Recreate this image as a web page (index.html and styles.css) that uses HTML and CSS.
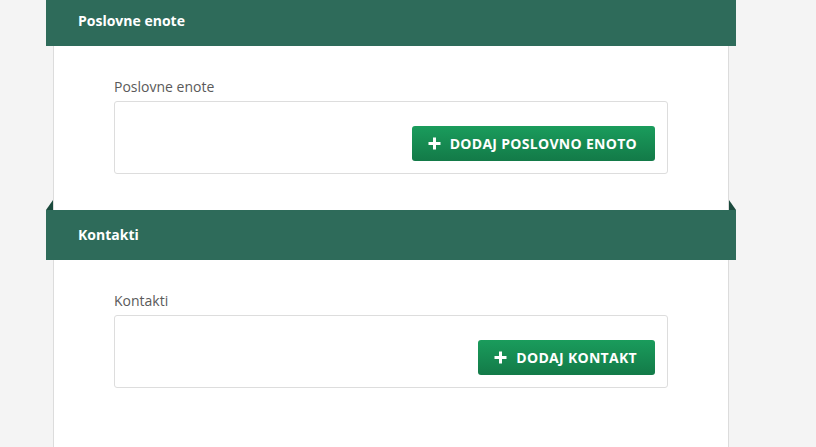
FILE: index.html
```html
<!DOCTYPE html>
<html lang="sl">
<head>
<meta charset="utf-8">
<title>Poslovne enote</title>
<link rel="stylesheet" href="styles.css">
</head>
<body>
<div class="page">
  <section class="section section-first">
    <div class="ribbon"><h2 class="ribbon-title">Poslovne enote</h2></div>
    <div class="section-body">
      <div class="field-label">Poslovne enote</div>
      <div class="field-box">
        <button class="btn-add" type="button">
          <svg class="plus" width="13" height="13" viewBox="0 0 13 13"><path d="M6.5 0.5V12.5M0.5 6.5H12.5" stroke="#fff" stroke-width="3" fill="none"/></svg>
          <span>DODAJ POSLOVNO ENOTO</span>
        </button>
      </div>
    </div>
  </section>
  <section class="section">
    <div class="ribbon"><h2 class="ribbon-title">Kontakti</h2></div>
    <div class="section-body">
      <div class="field-label">Kontakti</div>
      <div class="field-box">
        <button class="btn-add" type="button">
          <svg class="plus" width="13" height="13" viewBox="0 0 13 13"><path d="M6.5 0.5V12.5M0.5 6.5H12.5" stroke="#fff" stroke-width="3" fill="none"/></svg>
          <span>DODAJ KONTAKT</span>
        </button>
      </div>
    </div>
  </section>
</div>
</body>
</html>
```
FILE: styles.css
```css
html, body {
  margin: 0;
  padding: 0;
}
body {
  background: #f4f4f4;
  font-family: "Open Sans", "Liberation Sans", sans-serif;
  overflow: hidden;
}
.page {
  margin-left: 53px;
  width: 674px;
  min-height: calc(100vh + 4px);
  background: #fff;
  border-left: 1px solid #dcdcdc;
  border-right: 1px solid #dcdcdc;
}
.section-first {
  margin-top: -4px;
}
.ribbon {
  position: relative;
  margin: 0 -8px;
  height: 50px;
  background: #2e6b5a;
  display: flex;
  align-items: center;
  padding-left: 32px;
}
.ribbon::before,
.ribbon::after {
  content: "";
  position: absolute;
  top: -10px;
  width: 7px;
  height: 10px;
  background: #1b4a3d;
}
.ribbon::before {
  left: 0;
  clip-path: polygon(100% 0, 100% 100%, 0 100%);
}
.ribbon::after {
  right: 0;
  clip-path: polygon(0 0, 100% 100%, 0 100%);
}
.ribbon-title {
  margin: 0;
  color: #fff;
  font-size: 14px;
  font-weight: 700;
  line-height: 20px;
}
.section-body {
  padding: 31px 60px 36px;
}
.field-label {
  font-size: 14px;
  line-height: 20px;
  color: #5a5a5a;
  margin-bottom: 4px;
}
.field-box {
  border: 1px solid #dddddd;
  border-radius: 3px;
  padding: 24px 12px 12px;
  display: flex;
  justify-content: flex-end;
}
.btn-add {
  height: 35px;
  display: flex;
  align-items: center;
  gap: 9px;
  padding: 0 18px 0 16px;
  border: none;
  border-radius: 3px;
  background: linear-gradient(to bottom, #1a9c5c, #137a48);
  color: #fff;
  font-family: "Open Sans", "Liberation Sans", sans-serif;
  font-size: 14px;
  font-weight: 700;
  letter-spacing: 0.3px;
}
.plus {
  display: block;
}
```
